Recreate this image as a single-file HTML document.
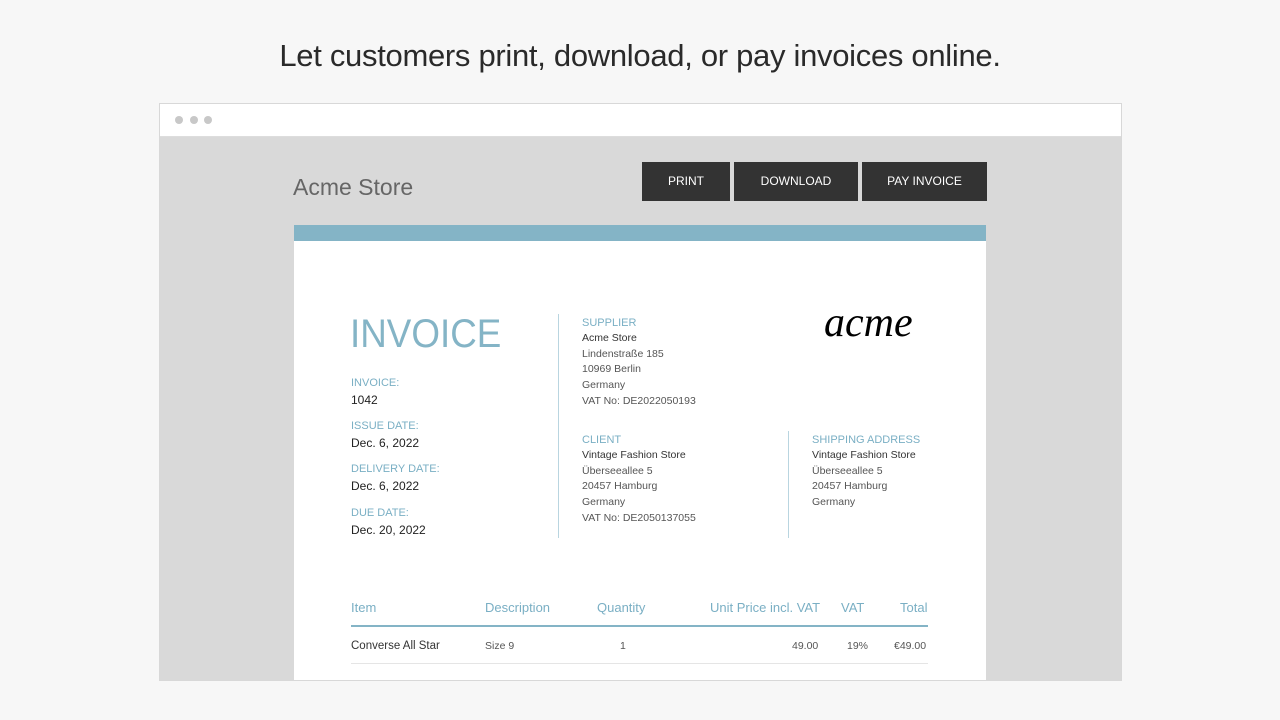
<!DOCTYPE html><html><head><style>
body{margin:0;width:1280px;height:720px;background:#f7f7f7;font-family:"Liberation Sans",sans-serif;position:relative;overflow:hidden}
.a{position:absolute}
.h{top:38px;left:0;width:1280px;text-align:center;font-size:31px;color:#2a2a2a;letter-spacing:-0.3px}
.win{left:159px;top:103px;width:961px;height:576px;border:1px solid #d8d8d8;background:#fff;overflow:hidden}
.bar{height:32px;border-bottom:1px solid #ddd;background:#fff}
.dot{width:8px;height:8px;border-radius:50%;background:#c8c8c8;top:12px}
.bg{top:33px;left:0;width:961px;height:545px;background:#d9d9d9}
.btn{background:#333;color:#fff;font-size:12px;text-align:center;line-height:39px;height:39px;top:58px}
.pap{left:134px;top:121px;width:692px;height:460px;background:#fff;border-top:16px solid #84b4c6}
.lb{color:#7aafc4;font-size:11px}
.tx{color:#555;font-size:10.5px;line-height:15.7px}
.bk{color:#222;font-size:12px}
.th{color:#7aafc4;font-size:13px;top:359px}
</style></head><body>
<div class="a h">Let customers print, download, or pay invoices online.</div>
<div class="a win">
<div class="bar"></div>
<div class="a dot" style="left:15px"></div><div class="a dot" style="left:30px"></div><div class="a dot" style="left:44px"></div>
<div class="a bg">
<div class="a" style="left:133px;top:37px;font-size:23px;color:#666">Acme Store</div>
<div class="a btn" style="left:482px;width:88px;top:25px">PRINT</div>
<div class="a btn" style="left:574px;width:124px;top:25px">DOWNLOAD</div>
<div class="a btn" style="left:702px;width:125px;top:25px">PAY INVOICE</div>
<div class="a pap" style="top:88px">
<div class="a" style="left:56px;top:71px;font-size:40px;color:#84b4c6;transform:scaleX(0.92);transform-origin:left">INVOICE</div>
<div class="a lb" style="left:57px;top:136px">INVOICE:</div><div class="a bk" style="left:57px;top:152px">1042</div>
<div class="a lb" style="left:57px;top:179px">ISSUE DATE:</div><div class="a bk" style="left:57px;top:195px">Dec. 6, 2022</div>
<div class="a lb" style="left:57px;top:222px">DELIVERY DATE:</div><div class="a bk" style="left:57px;top:238px">Dec. 6, 2022</div>
<div class="a lb" style="left:57px;top:266px">DUE DATE:</div><div class="a bk" style="left:57px;top:282px">Dec. 20, 2022</div>
<div class="a" style="left:264px;top:73px;width:1px;height:224px;background:#b9d5e0"></div>
<div class="a" style="left:494px;top:190px;width:1px;height:107px;background:#b9d5e0"></div>
<div class="a lb" style="left:288px;top:76px">SUPPLIER</div>
<div class="a tx" style="left:288px;top:90px"><span style="color:#333">Acme Store</span><br>Lindenstraße 185<br>10969 Berlin<br>Germany<br>VAT No: DE2022050193</div>
<div class="a lb" style="left:288px;top:193px">CLIENT</div>
<div class="a tx" style="left:288px;top:207px"><span style="color:#333">Vintage Fashion Store</span><br>Überseeallee 5<br>20457 Hamburg<br>Germany<br>VAT No: DE2050137055</div>
<div class="a lb" style="left:518px;top:193px">SHIPPING ADDRESS</div>
<div class="a tx" style="left:518px;top:207px"><span style="color:#333">Vintage Fashion Store</span><br>Überseeallee 5<br>20457 Hamburg<br>Germany</div>
<div class="a" style="left:530px;top:58px;font-size:42px;font-family:'Liberation Serif',serif;font-style:italic;color:#000;letter-spacing:0px">acme</div>
<div class="a th" style="left:57px">Item</div><div class="a th" style="left:191px">Description</div><div class="a th" style="left:303px">Quantity</div>
<div class="a th" style="left:416px">Unit Price incl. VAT</div><div class="a th" style="left:547px">VAT</div><div class="a th" style="left:606px">Total</div>
<div class="a" style="left:57px;top:384px;width:577px;height:2px;background:#84b4c6"></div>
<div class="a" style="left:57px;top:399px;font-size:11.5px;color:#333">Converse All Star</div>
<div class="a tx" style="left:191px;top:398px">Size 9</div><div class="a tx" style="left:326px;top:398px">1</div>
<div class="a tx" style="left:498px;top:398px">49.00</div><div class="a tx" style="left:553px;top:398px">19%</div><div class="a tx" style="left:600px;top:398px">€49.00</div>
<div class="a" style="left:57px;top:422px;width:577px;height:1px;background:#e5e5e5"></div>
</div></div></div>
</body></html>
